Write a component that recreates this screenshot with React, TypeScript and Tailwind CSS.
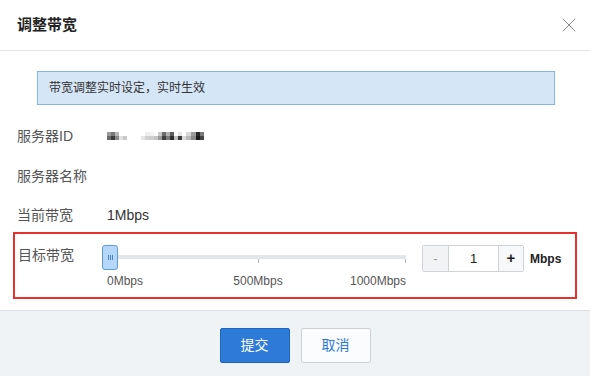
import { X } from 'lucide-react'

const font = { fontFamily: '"Liberation Sans", "Noto Sans CJK SC", sans-serif' }

// blurred server id: [width, top shade, bottom shade]
const idCells: [string, string, string][] = [
  ['w-[4px]', 'bg-[#9a9a9a]', 'bg-[#6a6a6a]'],
  ['w-[4px]', 'bg-[#7a7a7a]', 'bg-[#3a3a3a]'],
  ['w-[4px]', 'bg-[#b5b5b5]', 'bg-[#8a8a8a]'],
  ['w-[4px]', 'bg-white', 'bg-[#e0e0e0]'],
  ['w-[4px]', 'bg-white', 'bg-[#c8c8c8]'],
  ['w-[14px]', 'bg-white', 'bg-white'],
  ['w-[4px]', 'bg-white', 'bg-[#e4e4e4]'],
  ['w-[4px]', 'bg-[#ececec]', 'bg-[#d0d0d0]'],
  ['w-[5px]', 'bg-[#f2f2f2]', 'bg-[#cfcfcf]'],
  ['w-[4px]', 'bg-white', 'bg-[#c4c4c4]'],
  ['w-[4px]', 'bg-[#c9c9c9]', 'bg-[#9a9a9a]'],
  ['w-[4px]', 'bg-[#6b6b6b]', 'bg-[#3e3e3e]'],
  ['w-[4px]', 'bg-[#b0b0b0]', 'bg-[#7a7a7a]'],
  ['w-[4px]', 'bg-[#5c5c5c]', 'bg-[#2e2e2e]'],
  ['w-[4px]', 'bg-white', 'bg-[#c0c0c0]'],
  ['w-[4px]', 'bg-[#e6e6e6]', 'bg-[#3c3c3c]'],
  ['w-[4px]', 'bg-white', 'bg-[#dcdcdc]'],
  ['w-[5px]', 'bg-[#d8d8d8]', 'bg-[#b8b8b8]'],
  ['w-[5px]', 'bg-[#9c9c9c]', 'bg-[#8a8a8a]'],
  ['w-[4px]', 'bg-[#2a2a2a]', 'bg-[#1a1a1a]'],
  ['w-[4px]', 'bg-[#7a7a7a]', 'bg-[#444]'],
]

function BlurredId() {
  return (
    <div className="flex items-center">
      {idCells.map(([w, top, bottom], i) => (
        <div key={i} className={`flex flex-col ${w}`}>
          <div className={`h-[4px] ${top}`} />
          <div className={`h-[4px] ${bottom}`} />
        </div>
      ))}
    </div>
  )
}

function Row({ label, children }: { label: string; children?: React.ReactNode }) {
  return (
    <div className="flex items-center h-[40px]">
      <div className="w-[90px] text-[14px] text-[#555]">{label}</div>
      <div className="text-[14px] text-[#333]">{children}</div>
    </div>
  )
}

export default function App() {
  return (
    <div className="w-[590px] h-[376px] bg-white flex flex-col" style={font}>
      {/* Header */}
      <div className="h-[51px] shrink-0 flex items-center justify-between pl-[17px] pr-[9px] border-b border-[#e3e3e3]">
        <h2 className="text-[15px] font-bold text-[#222]">调整带宽</h2>
        <X className="w-[24px] h-[24px] text-[#8a8a8a]" strokeWidth={1} />
      </div>

      {/* Body */}
      <div className="flex-1 flex flex-col pt-[20px]">
        <div className="ml-[37px] mr-[35px] h-[34px] flex items-center pl-[11px] bg-[#d5e6f6] border border-[#85b7e6] text-[12px] text-[#333]">
          带宽调整实时设定，实时生效
        </div>

        <div className="pl-[17px] mt-[11px]">
          <Row label="服务器ID"><BlurredId /></Row>
          <Row label="服务器名称" />
          <div className="-mt-[1px]"><Row label="当前带宽">1Mbps</Row></div>
        </div>

        {/* Target bandwidth */}
        <div className="-mt-[3px] ml-[13px] w-[564px] h-[67px] border-2 border-[#e8302c] flex pl-[3px]">
          <div className="w-[84px] pt-[11px] text-[14px] text-[#555]">目标带宽</div>
          <div className="relative w-[304px] h-full">
            <div className="absolute left-[8px] right-0 top-[21px] h-[4px] bg-[#e2e6ea]" />
            <div className="absolute left-[156px] top-[25px] w-px h-[4px] bg-[#bbb]" />
            <div className="absolute right-0 top-[25px] w-px h-[4px] bg-[#bbb]" />
            <div className="absolute left-0 top-[11px] w-[16px] h-[25px] rounded-[3px] bg-[#b6d6fb] border border-[#5b9de3] flex items-center justify-center gap-[1px]">
              <div className="w-px h-[5px] bg-[#4a83c8]" />
              <div className="w-px h-[5px] bg-[#4a83c8]" />
              <div className="w-px h-[5px] bg-[#4a83c8]" />
            </div>
            <span className="absolute left-[5px] top-[38px] text-[12px] text-[#555]">0Mbps</span>
            <span className="absolute left-[156px] -translate-x-1/2 top-[38px] text-[12px] text-[#555]">500Mbps</span>
            <span className="absolute right-0 top-[38px] text-[12px] text-[#555]">1000Mbps</span>
          </div>
          <div className="ml-[16px] pt-[11px] flex items-start">
            <div className="flex h-[27px] border border-[#cfd3d8] rounded-[2px]">
              <div className="w-[25px] bg-[#f2f3f5] flex items-center justify-center text-[13px] text-[#999]">-</div>
              <div className="w-[51px] bg-white border-x border-[#cfd3d8] flex items-center justify-center text-[13px] text-[#222]">1</div>
              <div className="w-[24px] bg-[#f7f8f9] flex items-center justify-center text-[15px] font-bold text-[#222]">+</div>
            </div>
            <div className="ml-[6px] h-[27px] flex items-center text-[12px] font-bold text-[#222]">Mbps</div>
          </div>
        </div>
      </div>

      {/* Footer */}
      <div className="h-[66px] shrink-0 bg-[#f0f3f6] border-t border-[#dde1e5] flex items-center justify-center gap-[11px] pt-[3px]">
        <button className="w-[70px] h-[35px] rounded-[2px] bg-[#2d7ad8] border border-[#1d66c2] text-white text-[14px]">提交</button>
        <button className="w-[70px] h-[35px] rounded-[2px] bg-[#fbfcfd] border border-[#cdd1d6] text-[#2d7ad8] text-[14px]">取消</button>
      </div>
    </div>
  )
}
